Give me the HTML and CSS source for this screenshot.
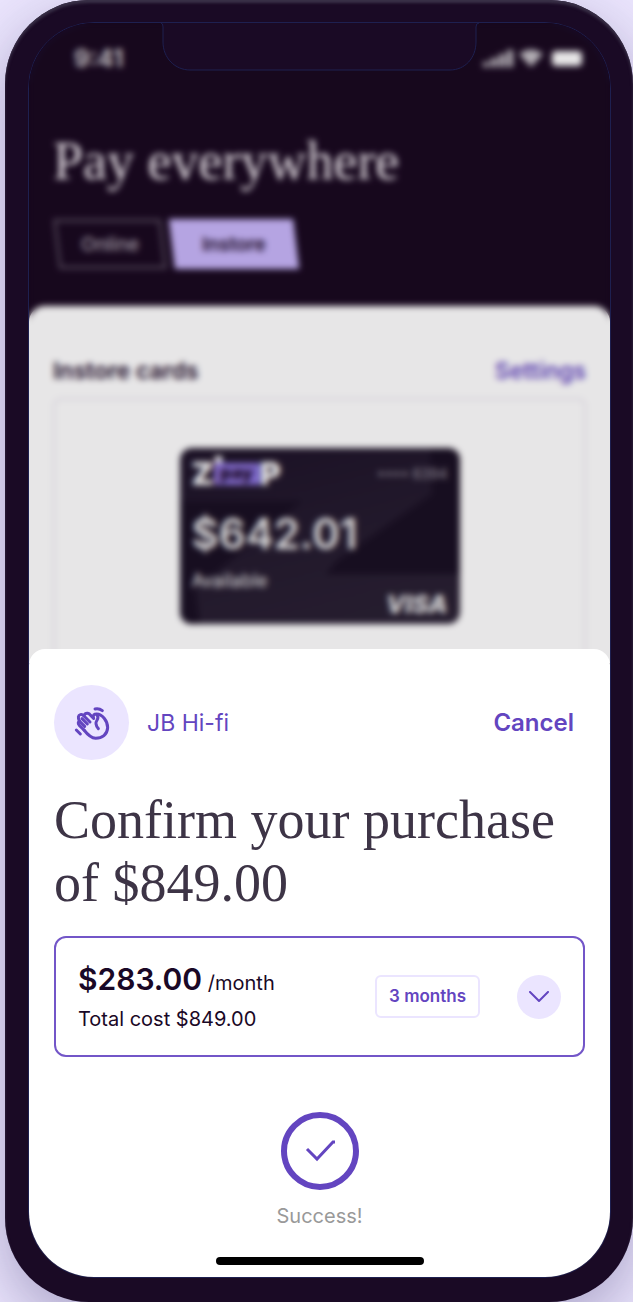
FILE: index.html
```
<!DOCTYPE html>
<html lang="en">
<head>
  <meta charset="UTF-8">
  <meta name="viewport" content="width=device-width, initial-scale=1.0">
  <title>Confirm your purchase</title>
  <link rel="stylesheet" href="styles.css">
</head>
<body>
  <div class="phone">
    <div class="screen">
      <div class="app">
        <div class="status-bar">
          <span class="time">9:41</span>
          <svg class="status-icons" width="104" height="20" viewBox="0 0 104 20">
            <path d="M2 14h6v5H2zM10 10h6v9h-6zM18 6h6v13h-6zM26 2h6v17h-6z"/>
            <path d="M38 6Q50 -3 62 6L50 19Z"/>
            <rect x="71" y="3" width="30" height="15" rx="4" fill="#fff"/>
          </svg>
        </div>
        <h2 class="app-title">Pay everywhere</h2>
        <div class="tabs">
          <button type="button" class="tab"><span>Online</span></button>
          <button type="button" class="tab active"><span>Instore</span></button>
        </div>
        <div class="panel">
          <div class="panel-head">
            <span>Instore cards</span>
            <a href="#">Settings</a>
          </div>
          <div class="card-box">
            <div class="card">
              <svg class="card-shapes" viewBox="0 0 280 176" preserveAspectRatio="none">
                <path d="M0 53H122L34 126L14 130L20 176H0Z" fill="#180f22"/>
                <path d="M250 0H280V126H146L158 112L252 46Z" fill="#180f22"/>
              </svg>
              <div class="card-row">
                <div class="logo">Z<span class="pay">pay</span>P</div>
                <span class="card-number">•••• 6394</span>
              </div>
              <div class="balance">$642.01</div>
              <div class="card-row">
                <span class="available">Available</span>
                <span class="visa">VISA</span>
              </div>
            </div>
          </div>
        </div>
        <div class="scrim"></div>
      </div>

      <div class="sheet">
        <div class="merchant">
          <div class="avatar">
            <svg width="36" height="36" viewBox="30 40 108 108" fill="none" stroke="#6345c0" stroke-width="9" stroke-linecap="round" stroke-linejoin="round">
              <path d="M93 52Q105 49 115 57"/>
              <path d="M37 115L49 127"/>
              <path d="M60 115L46 101Q39 92 47 88"/>
              <path d="M62 104L46 88Q39 72 49 69Q55 67 60 73L78 91"/>
              <path d="M54 81L70 97"/>
              <path d="M60 72Q63 64 71 65Q76 66 80 71L89 80"/>
              <path d="M88 77Q86 67 98 67C114 67 131 87 131 108C130 129 114 140 95 140C80 139 70 128 60 115"/>
              <path d="M100 72C107 82 94 87 96 96C97 103 99 107 103 111"/>
            </svg>
          </div>
          <span class="merchant-name">JB Hi-fi</span>
          <button type="button" class="cancel">Cancel</button>
        </div>

        <h1>Confirm your purchase of $849.00</h1>

        <div class="plan">
          <div class="plan-cost">
            <div><strong>$283.00</strong> /month</div>
            <div class="total">Total cost $849.00</div>
          </div>
          <span class="term">3 months</span>
          <button type="button" class="expand" aria-label="Show plans">
            <svg width="22" height="12" viewBox="0 0 22 12" fill="none" stroke="#6345c0" stroke-width="2" stroke-linecap="round" stroke-linejoin="round">
              <path d="M2 1l9 9l9-9"/>
            </svg>
          </button>
        </div>

        <div class="success">
          <svg width="78" height="78" viewBox="0 0 78 78" fill="none" stroke="#6345c0">
            <circle cx="39" cy="39" r="36" stroke-width="6"/>
            <path d="M26 37l10 10l16-17h2" stroke-width="3"/>
          </svg>
          <span>Success!</span>
        </div>
        <div class="home-bar"></div>
      </div>

      <svg class="notch" width="318" height="49" viewBox="0 0 318 49">
        <path d="M0 0H318V1Q315 1 315 5V20C315 36 304 48 289 48H29C14 48 2 36 2 20V5Q2 1 0 1Z" fill="#1a0a25"/>
        <path d="M0 1Q2 1 2 5V20C2 36 14 48 29 48H289C304 48 315 36 315 20V5Q315 1 318 1" fill="none" stroke="#1e2050"/>
      </svg>
    </div>
  </div>
</body>
</html>
```
FILE: styles.css
```
* {
  box-sizing: border-box;
}
body {
  margin: 0;
  font-family: Inter, "Liberation Sans", sans-serif;
  background-color: #ebe5fd;
  color: #1a0826;
  overflow: hidden;
}
button {
  font-family: inherit;
  border: 0;
  padding: 0;
  background: none;
  cursor: pointer;
}
.phone {
  margin-left: 5px;
  padding: 22px 22px 24px 23px;
  border-radius: 84px;
  background-color: #1a0a25;
  box-shadow: inset 0 3px 3px #3a3148, 0 20px 60px rgba(50, 40, 100, 0.35);
}
.screen {
  position: relative;
  border: 1px solid #1e2050;
  border-radius: 66px;
  overflow: hidden;
  background-color: #18081f;
}
.app {
  position: relative;
  display: flex;
  flex-direction: column;
  height: 640px;
  background-color: #18081f;
}
.status-bar {
  display: flex;
  justify-content: space-between;
  align-items: center;
  padding: 20px 25px 0 45px;
  height: 50px;
}
.time {
  color: #d0ccd0;
  font-size: 24px;
  font-weight: 700;
}
.status-icons {
  fill: #c4c0c6;
}
.app-title {
  margin: 56px 24px 0;
  color: #f4eef4;
  font-family: "Liberation Serif", serif;
  font-size: 54px;
  font-weight: 400;
  line-height: 64px;
}
.tabs {
  display: flex;
  gap: 8px;
  margin: 26px 27px 0;
}
.tab {
  height: 50px;
  padding: 0 22px;
  border: 3px solid #54495b;
  color: #b4abb7;
  font-size: 19px;
  font-weight: 500;
  transform: skewX(7deg);
}
.tab span {
  display: block;
  transform: skewX(-7deg);
}
.tab.active {
  padding: 0 27px;
  border-color: #c8b6fa;
  background-color: #c8b6fa;
  color: #1a0826;
  font-weight: 600;
}
.panel {
  flex: 1;
  display: flex;
  flex-direction: column;
  margin-top: 37px;
  padding: 51px 24px 0;
  border-radius: 16px 16px 0 0;
  background-color: #fff;
}
.panel-head {
  display: flex;
  justify-content: space-between;
  margin-bottom: 13px;
  font-size: 23px;
  font-weight: 600;
  line-height: 28px;
}
.panel-head a {
  color: #6345c0;
  text-decoration: none;
}
.card-box {
  flex: 1;
  padding-top: 48px;
  border: 2px solid #ece9f1;
  border-bottom: 0;
  border-radius: 8px 8px 0 0;
}
.card {
  position: relative;
  display: flex;
  flex-direction: column;
  width: 280px;
  height: 176px;
  margin: 0 auto;
  padding: 12px;
  border-radius: 12px;
  overflow: hidden;
  background: linear-gradient(165deg, #1d1328, #2a2234);
  color: #eee;
}
.card-shapes {
  position: absolute;
  inset: 0;
  width: 100%;
  height: 100%;
}
.card-row {
  position: relative;
  display: flex;
  justify-content: space-between;
}
.logo {
  display: flex;
  align-items: center;
  color: #fff;
  font-size: 32px;
  font-weight: 900;
  line-height: 28px;
}
.pay {
  position: relative;
  width: 46px;
  height: 22px;
  background-color: #8e75e0;
  color: #1a0826;
  font-size: 18px;
  line-height: 20px;
  text-align: center;
}
/* dot of the i in the logo */
.pay::before {
  content: "";
  position: absolute;
  top: -7px;
  left: 1px;
  width: 7px;
  height: 7px;
  background-color: #fff;
}
.card-number {
  color: #a39ea9;
  font-size: 14px;
  line-height: 28px;
}
.balance {
  position: relative;
  margin-top: 20px;
  font-size: 42px;
  font-weight: 600;
  line-height: 52px;
}
.available {
  padding-top: 10px;
  font-size: 18px;
}
.visa {
  padding-top: 30px;
  font-size: 25px;
  font-style: italic;
  font-weight: 800;
  line-height: 28px;
}
/* dims and blurs the app under the sheet */
.scrim {
  position: absolute;
  inset: 0;
  background-color: rgba(20, 10, 15, 0.1);
  backdrop-filter: blur(3px);
}
.sheet {
  position: relative;
  margin-top: -14px;
  padding: 36px 25px 12px;
  border-radius: 16px 16px 0 0;
  background-color: #fff;
}
.merchant {
  display: flex;
  align-items: center;
  gap: 18px;
  padding-right: 11px;
  color: #6345c0;
  font-size: 23px;
}
.avatar {
  display: flex;
  justify-content: center;
  align-items: center;
  width: 75px;
  height: 75px;
  border-radius: 50%;
  background-color: #ebe5ff;
}
.merchant-name {
  flex: 1;
}
.cancel {
  color: #6345c0;
  font-size: 24px;
  font-weight: 600;
}
h1 {
  margin: 29px 0 21px;
  color: #3d3446;
  font-family: "Liberation Serif", serif;
  font-size: 54px;
  font-weight: 400;
  line-height: 63px;
}
.plan {
  display: flex;
  align-items: center;
  padding: 0 22px;
  height: 121px;
  border: 2px solid #7356c8;
  border-radius: 12px;
}
.plan-cost {
  flex: 1;
  font-size: 20px;
  line-height: 40px;
}
.plan-cost strong {
  font-size: 30px;
  font-weight: 600;
}
.total {
  line-height: 32px;
}
.term {
  padding: 0 12px;
  border: 2px solid #ebe5ff;
  border-radius: 6px;
  color: #6345c0;
  font-size: 17px;
  font-weight: 600;
  line-height: 39px;
}
.expand {
  display: flex;
  justify-content: center;
  align-items: center;
  width: 44px;
  height: 44px;
  margin-left: 37px;
  border-radius: 50%;
  background-color: #ebe5ff;
}
.success {
  display: flex;
  flex-direction: column;
  align-items: center;
  gap: 14px;
  margin-top: 55px;
  color: #999;
  font-size: 20px;
  line-height: 24px;
}
.home-bar {
  width: 208px;
  height: 8px;
  margin: 29px auto 0;
  border-radius: 4px;
  background-color: #000;
}
.notch {
  position: absolute;
  top: -1px;
  left: 50%;
  transform: translateX(-50%);
}
```
